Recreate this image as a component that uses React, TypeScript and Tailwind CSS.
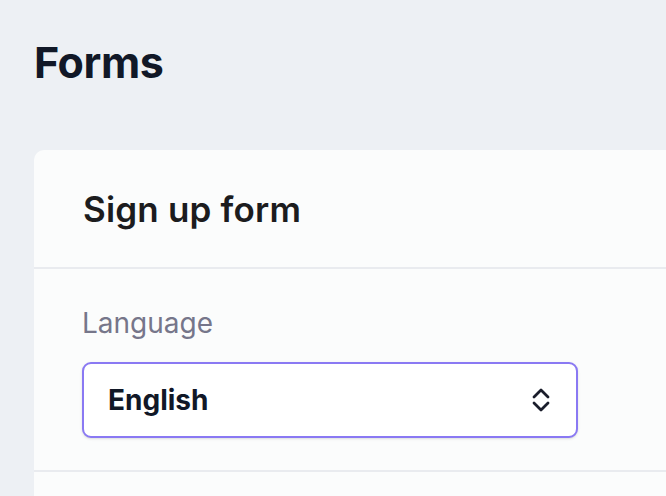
export default function App() {
  return (
    <div className="h-[496px] overflow-hidden bg-[#edf0f4] pl-[34px] font-['Inter',sans-serif]">
      <h1 className="pt-[34px] text-[43px] font-bold leading-[56px] tracking-[-0.01em] text-[#111827]">Forms</h1>

      <div className="mt-[60px] w-[700px] rounded-[10px] bg-[#fbfcfc]">
        <div className="flex h-[119px] items-center border-b-2 border-[#e9ebef] pl-[49px]">
          <h2 className="pt-[1px] text-[35px] font-semibold tracking-[0.005em] text-[#1c1c1e]">Sign up form</h2>
        </div>

        <div className="border-b-2 border-[#e9ebef] pb-[32px] pl-[48px] pt-[34px]">
          <label className="block text-[28px] leading-[40px] text-[#76768a]">Language</label>
          <div className="mt-[19px] flex h-[76px] w-[496px] items-center justify-between rounded-[9px] border-2 border-[#8a79f3] bg-white pl-[24px] pr-[25px] shadow-sm">
            <span className="text-[28px] font-bold text-[#111827]">English</span>
            <svg width="20" height="26" viewBox="0 0 20 26" fill="none" stroke="#1a1d2b" strokeWidth="2.8" strokeLinecap="round" strokeLinejoin="round">
              <path d="M3 10 L10 3 L17 10" />
              <path d="M3 16 L10 23 L17 16" />
            </svg>
          </div>
        </div>

        <div className="h-[40px]" />
      </div>
    </div>
  );
}
